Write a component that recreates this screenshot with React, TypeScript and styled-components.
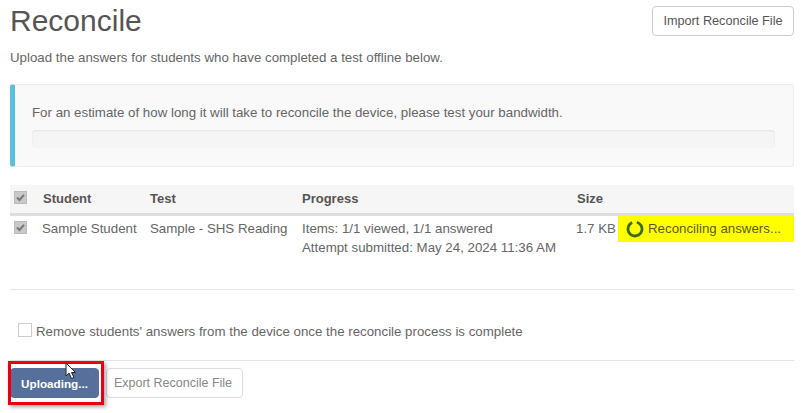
import React from "react";
import styled, { createGlobalStyle } from "styled-components";

const Global = createGlobalStyle`
  html, body { margin: 0; padding: 0; background: #fff; overflow: hidden; }
  body { font-family: "Liberation Sans", Arial, sans-serif; color: #555; }
`;
const Page = styled.div`
  width: 784px; height: 413px; margin-left: 10px; display: flex; flex-direction: column;
  position: relative; overflow: visible;
`;
const Header = styled.div`
  display: flex; justify-content: space-between; align-items: flex-start; height: 49px; padding-top: 6px; box-sizing: border-box;
`;
const Title = styled.h1`
  margin: -2px 0 0 0; font-size: 30px; font-weight: 400; line-height: 34px; color: #555;
`;
const Button = styled.button`
  font-family: inherit; font-size: 13.3px; line-height: 18px; color: #555; background: #fff;
  border: 1px solid #ccc; border-radius: 4px; padding: 0; height: 30px; box-sizing: border-box; white-space: nowrap;
`;
const ImportButton = styled(Button)` width: 142px; font-size: 12.7px; `;
const Intro = styled.p`
  margin: 0; font-size: 13.3px; line-height: 18px; color: #666; height: 35px;
`;
const Well = styled.div`
  box-sizing: border-box; height: 83px; background: #f9f9f9; border: 1px solid #eee;
  border-left: 5px solid #5bc0de; border-radius: 3px; padding: 20px 18px 0 17px;
`;
const WellText = styled.div`
  font-size: 13.3px; line-height: 16px; color: #666; margin-bottom: 9px;
`;
const Track = styled.div`
  height: 18px; background: #f5f5f5; border-radius: 4px; box-shadow: inset 0 1px 2px rgba(0,0,0,.08);
`;
const columns = "32px 108px 152px 275px 41px 176px";
const HeadRow = styled.div`
  display: grid; grid-template-columns: ${columns}; align-items: center; height: 31px; margin-top: 18px; padding-bottom: 2px;
  background: #f6f6f6; border-bottom: 3px solid #ddd; box-sizing: border-box; font-size: 13px; font-weight: 700; color: #555;
`;
const HeadLabel = styled.div<{ $shift?: number }>` padding-left: ${(p) => p.$shift ?? 0}px; `;
const DataRow = styled.div`
  display: grid; grid-template-columns: ${columns}; height: 74px; font-size: 13.3px; line-height: 19px; color: #666;
  border-bottom: 1px solid #e6e6e6; box-sizing: border-box;
`;
const Cell = styled.div` padding-top: 3px; white-space: nowrap; `;
const CheckCell = styled.div` padding-left: 4px; padding-top: 5px; `;
const HeadCheckCell = styled.div` padding-left: 4px; display: flex; margin-top: -2px; `;
const Check = styled.span`
  display: block; width: 13px; height: 13px; background: #c9c9c9; border: 1px solid #bbb; box-sizing: border-box;
  color: #777; position: relative;
`;
const SizeCell = styled(Cell)` margin-left: -1px; `;
const Status = styled.div`
  display: flex; align-items: center; gap: 4px; height: 26px; background: #ffff00; color: #5b5b00; padding: 0 0 2px 8px;
  box-sizing: border-box; white-space: nowrap;
`;
const Spin = styled.svg` width: 18px; height: 18px; flex: none; margin-top: 1px; `;
const RemoveRow = styled.label`
  display: flex; align-items: center; gap: 4px; height: 71px; padding-left: 8px; box-sizing: border-box;
  font-size: 13.3px; color: #666; border-bottom: 1px solid #e3e3e3; padding-top: 12px;
`;
const EmptyBox = styled.span`
  display: block; width: 14px; height: 14px; border: 1px solid #ccc; background: #fff; box-sizing: border-box; margin-top: -2px;
`;
const Actions = styled.div` display: flex; gap: 7px; padding-top: 7px; `;
const Primary = styled(Button)`
  width: 89px; background: #56709b; border-color: #56709b; color: #fff; font-weight: 700; font-size: 11.7px; padding-top: 2px;
`;
const Secondary = styled(Button)` width: 137px; color: #888; font-size: 12.5px; border-color: #ddd; padding-right: 3px; `;
const Highlight = styled.div`
  position: absolute; left: -2px; top: 361px; width: 96px; height: 44px; box-sizing: border-box;
  border: 3px solid #e8000f; box-shadow: 2px 2px 4px rgba(0,0,0,.35);
`;
const Cursor = styled.svg` position: absolute; left: 55px; top: 362px; width: 12px; height: 18px; `;
const TickMark = styled.svg` display: block; `;

const Tick = () => (
  <TickMark width="11" height="11" viewBox="0 0 11 11">
    <path d="M2 5.5 L4.5 8 L9 2.8" fill="none" stroke="#777" strokeWidth="2" />
  </TickMark>
);

export default function App() {
  return (
    <Page>
      <Global />
      <Header>
        <Title>Reconcile</Title>
        <ImportButton>Import Reconcile File</ImportButton>
      </Header>
      <Intro>Upload the answers for students who have completed a test offline below.</Intro>
      <Well>
        <WellText>For an estimate of how long it will take to reconcile the device, please test your bandwidth.</WellText>
        <Track />
      </Well>
      <HeadRow>
        <HeadCheckCell><Check><Tick /></Check></HeadCheckCell>
        <HeadLabel $shift={1}>Student</HeadLabel>
        <HeadLabel>Test</HeadLabel>
        <HeadLabel>Progress</HeadLabel>
        <HeadLabel>Size</HeadLabel>
        <HeadLabel />
      </HeadRow>
      <DataRow>
        <CheckCell><Check><Tick /></Check></CheckCell>
        <Cell>Sample Student</Cell>
        <Cell>Sample - SHS Reading</Cell>
        <Cell>Items: 1/1 viewed, 1/1 answered<br />Attempt submitted: May 24, 2024 11:36 AM</Cell>
        <SizeCell>1.7 KB</SizeCell>
        <Status>
          <Spin viewBox="0 0 18 18">
            <circle cx="9" cy="9" r="7" fill="none" stroke="#3c6a00" strokeWidth="2.8" strokeDasharray="39 5" transform="rotate(-75 9 9)" />
          </Spin>
          Reconciling answers...
        </Status>
      </DataRow>
      <RemoveRow><EmptyBox />Remove students' answers from the device once the reconcile process is complete</RemoveRow>
      <Actions>
        <Primary>Uploading...</Primary>
        <Secondary>Export Reconcile File</Secondary>
      </Actions>
      <Highlight />
      <Cursor viewBox="0 0 12 18">
        <path d="M1 1 L1 14 L4 11 L6.5 16.5 L9 15.5 L6.5 10.5 L10.5 10.5 Z" fill="#fff" stroke="#222" strokeWidth="1" />
      </Cursor>
    </Page>
  );
}
